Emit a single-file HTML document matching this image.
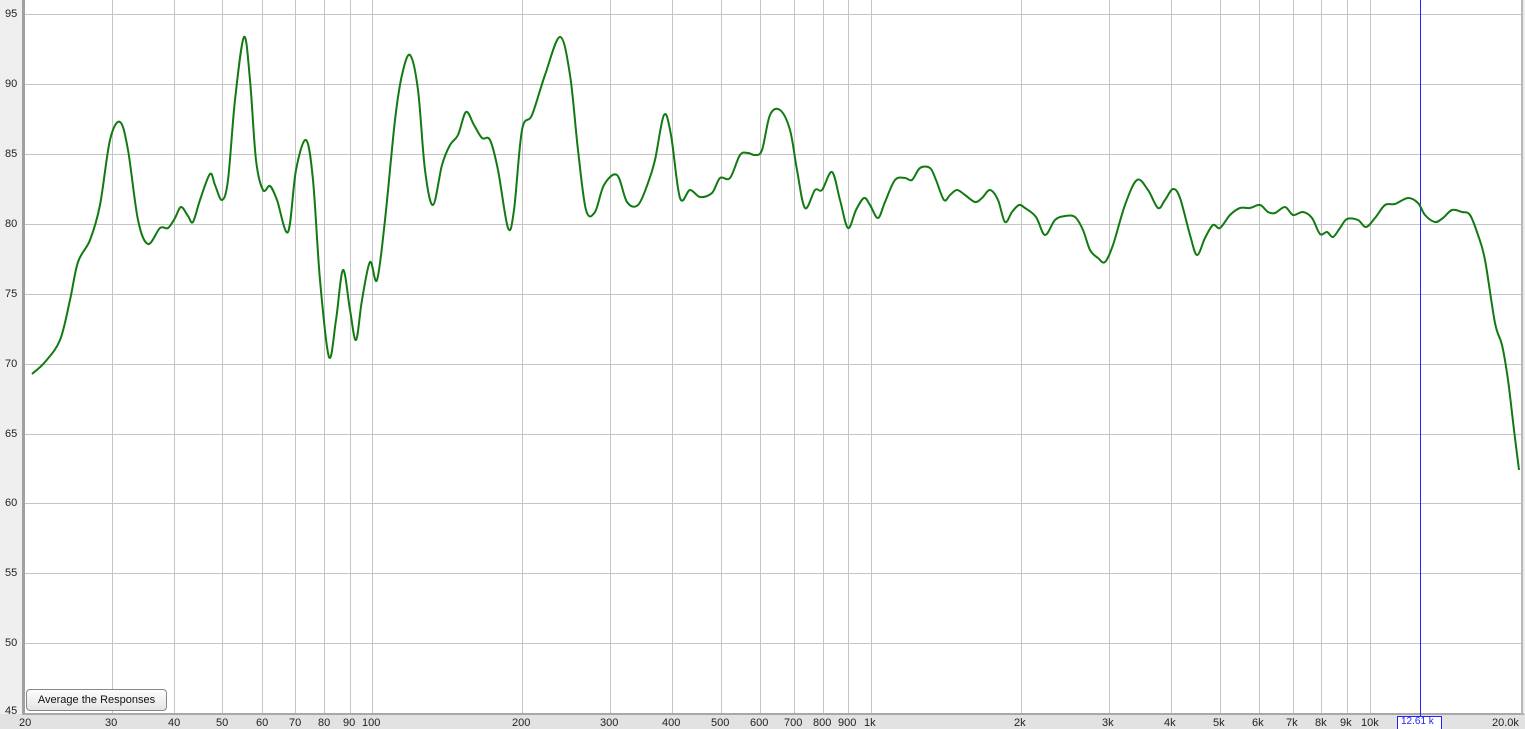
<!DOCTYPE html><html><head><style>
body{margin:0;width:1525px;height:729px;background:#ececec;overflow:hidden;position:relative;font-family:"Liberation Sans",sans-serif;}
.t{position:absolute;font-size:11px;color:#222;}
.b{top:717px}
</style></head><body>
<svg width="1525" height="729" style="position:absolute;left:0;top:0">
<rect x="0" y="0" width="23" height="729" fill="#efefef"/>
<rect x="0" y="714" width="1525" height="15" fill="#e2e2e2"/>
<rect x="25" y="0" width="1497" height="713" fill="#fff"/>
<rect x="22" y="0" width="3" height="715" fill="#a0a0a0"/>
<rect x="22" y="713" width="1502" height="2" fill="#a8a8a8"/>
<rect x="1521" y="0" width="2" height="715" fill="#b8b8b8"/>
<g stroke="#c4c4c4" stroke-width="1">
<line x1="25" x2="1521" y1="14.5" y2="14.5"/><line x1="25" x2="1521" y1="84.5" y2="84.5"/><line x1="25" x2="1521" y1="154.5" y2="154.5"/><line x1="25" x2="1521" y1="224.5" y2="224.5"/><line x1="25" x2="1521" y1="294.5" y2="294.5"/><line x1="25" x2="1521" y1="364.5" y2="364.5"/><line x1="25" x2="1521" y1="434.5" y2="434.5"/><line x1="25" x2="1521" y1="503.5" y2="503.5"/><line x1="25" x2="1521" y1="573.5" y2="573.5"/><line x1="25" x2="1521" y1="643.5" y2="643.5"/>
<line x1="112.5" x2="112.5" y1="0" y2="713"/><line x1="174.5" x2="174.5" y1="0" y2="713"/><line x1="222.5" x2="222.5" y1="0" y2="713"/><line x1="262.5" x2="262.5" y1="0" y2="713"/><line x1="295.5" x2="295.5" y1="0" y2="713"/><line x1="324.5" x2="324.5" y1="0" y2="713"/><line x1="350.5" x2="350.5" y1="0" y2="713"/><line x1="372.5" x2="372.5" y1="0" y2="713"/>
<line x1="522.5" x2="522.5" y1="0" y2="713"/><line x1="610.5" x2="610.5" y1="0" y2="713"/><line x1="672.5" x2="672.5" y1="0" y2="713"/><line x1="721.5" x2="721.5" y1="0" y2="713"/><line x1="760.5" x2="760.5" y1="0" y2="713"/><line x1="794.5" x2="794.5" y1="0" y2="713"/><line x1="823.5" x2="823.5" y1="0" y2="713"/><line x1="848.5" x2="848.5" y1="0" y2="713"/><line x1="871.5" x2="871.5" y1="0" y2="713"/>
<line x1="1021.5" x2="1021.5" y1="0" y2="713"/><line x1="1109.5" x2="1109.5" y1="0" y2="713"/><line x1="1171.5" x2="1171.5" y1="0" y2="713"/><line x1="1220.5" x2="1220.5" y1="0" y2="713"/><line x1="1259.5" x2="1259.5" y1="0" y2="713"/><line x1="1293.5" x2="1293.5" y1="0" y2="713"/><line x1="1321.5" x2="1321.5" y1="0" y2="713"/><line x1="1347.5" x2="1347.5" y1="0" y2="713"/><line x1="1370.5" x2="1370.5" y1="0" y2="713"/>
</g>
<line x1="1420.5" x2="1420.5" y1="0" y2="718" stroke="#2222ff" stroke-width="1"/>
<path id="curve" fill="none" stroke="#127a12" stroke-width="2" stroke-linejoin="round" d=""/>
<rect x="1397.5" y="716.5" width="44" height="13" fill="#fff" stroke="#2222ff"/>
</svg>
<div class="t" style="left:5px;top:8px">95</div><div class="t" style="left:5px;top:78px">90</div><div class="t" style="left:5px;top:148px">85</div><div class="t" style="left:5px;top:218px">80</div><div class="t" style="left:5px;top:288px">75</div><div class="t" style="left:5px;top:358px">70</div><div class="t" style="left:5px;top:428px">65</div><div class="t" style="left:5px;top:497px">60</div><div class="t" style="left:5px;top:567px">55</div><div class="t" style="left:5px;top:637px">50</div><div class="t" style="left:5px;top:705px">45</div>
<div class="t b" style="left:19px">20</div><div class="t b" style="left:105px">30</div><div class="t b" style="left:168px">40</div><div class="t b" style="left:216px">50</div><div class="t b" style="left:256px">60</div><div class="t b" style="left:289px">70</div><div class="t b" style="left:318px">80</div><div class="t b" style="left:343px">90</div><div class="t b" style="left:362px">100</div>
<div class="t b" style="left:512px">200</div><div class="t b" style="left:600px">300</div><div class="t b" style="left:662px">400</div><div class="t b" style="left:711px">500</div><div class="t b" style="left:750px">600</div><div class="t b" style="left:784px">700</div><div class="t b" style="left:813px">800</div><div class="t b" style="left:838px">900</div><div class="t b" style="left:864px">1k</div>
<div class="t b" style="left:1014px">2k</div><div class="t b" style="left:1102px">3k</div><div class="t b" style="left:1164px">4k</div><div class="t b" style="left:1213px">5k</div><div class="t b" style="left:1252px">6k</div><div class="t b" style="left:1286px">7k</div><div class="t b" style="left:1315px">8k</div><div class="t b" style="left:1340px">9k</div><div class="t b" style="left:1361px">10k</div>
<div class="t" style="left:1401px;top:716px;color:#2222ff;font-size:10px">12.61 k</div><div class="t b" style="left:1492px">20.0k</div>
<div style="position:absolute;left:26px;top:689px;width:139px;height:20px;border:1px solid #888;border-radius:4px;background:linear-gradient(#fdfdfd,#e4e4e4);font-size:11px;line-height:20px;text-align:center;color:#111">Average the Responses</div>
<script>
var s="32,374 45,362 60,340 70,300 78,262 90,240 100,205 110,140 120,122 128,150 138,220 148,244 160,228 168,228 175,218 181,207 188,216 193,222 200,200 210,174 215,185 222,200 228,180 235,100 244,37 250,80 256,160 263,190 270,186 277,200 288,232 296,170 306,140 313,180 320,280 329,357 336,320 343,270 350,310 356,340 362,300 370,262 377,280 385,220 395,120 402,75 410,55 418,90 425,170 433,205 442,165 450,145 458,135 466,112 474,125 482,138 490,140 498,170 508,228 514,210 522,130 532,115 545,75 560,37 570,75 578,150 586,210 595,212 604,185 617,175 627,202 638,205 648,183 655,160 664,115 671,135 680,198 690,190 700,197 712,193 720,178 730,178 740,155 748,153 755,155 762,150 770,115 780,110 790,130 797,170 805,208 815,190 822,190 832,172 840,200 848,228 856,210 864,198 870,205 878,218 885,202 895,180 905,178 912,180 920,168 930,168 936,180 944,200 950,195 957,190 965,195 975,202 982,198 990,190 998,200 1005,222 1012,212 1019,205 1025,208 1036,217 1045,235 1055,220 1065,216 1075,217 1083,230 1090,250 1098,258 1105,262 1113,245 1125,205 1137,180 1148,190 1158,208 1165,200 1173,189 1180,198 1190,235 1197,255 1205,238 1213,225 1220,228 1230,215 1240,208 1250,208 1260,205 1268,212 1275,213 1285,207 1293,215 1303,212 1312,218 1320,234 1327,232 1333,237 1340,228 1347,219 1358,220 1366,227 1375,218 1385,205 1395,204 1408,198 1418,203 1425,215 1435,222 1443,218 1452,210 1462,212 1470,215 1478,235 1485,260 1495,323 1502,345 1508,380 1514,430 1519,470";
var p=s.split(" ").map(function(a){return a.split(",").map(Number)});
var d="M"+p[0][0]+","+p[0][1];
for(var i=0;i<p.length-1;i++){var a=p[i-1]||p[i],b=p[i],c=p[i+1],e=p[i+2]||c;
d+=" C"+(b[0]+(c[0]-a[0])/6)+","+(b[1]+(c[1]-a[1])/6)+" "+(c[0]-(e[0]-b[0])/6)+","+(c[1]-(e[1]-b[1])/6)+" "+c[0]+","+c[1];}
document.getElementById("curve").setAttribute("d",d);
</script>
</body></html>
